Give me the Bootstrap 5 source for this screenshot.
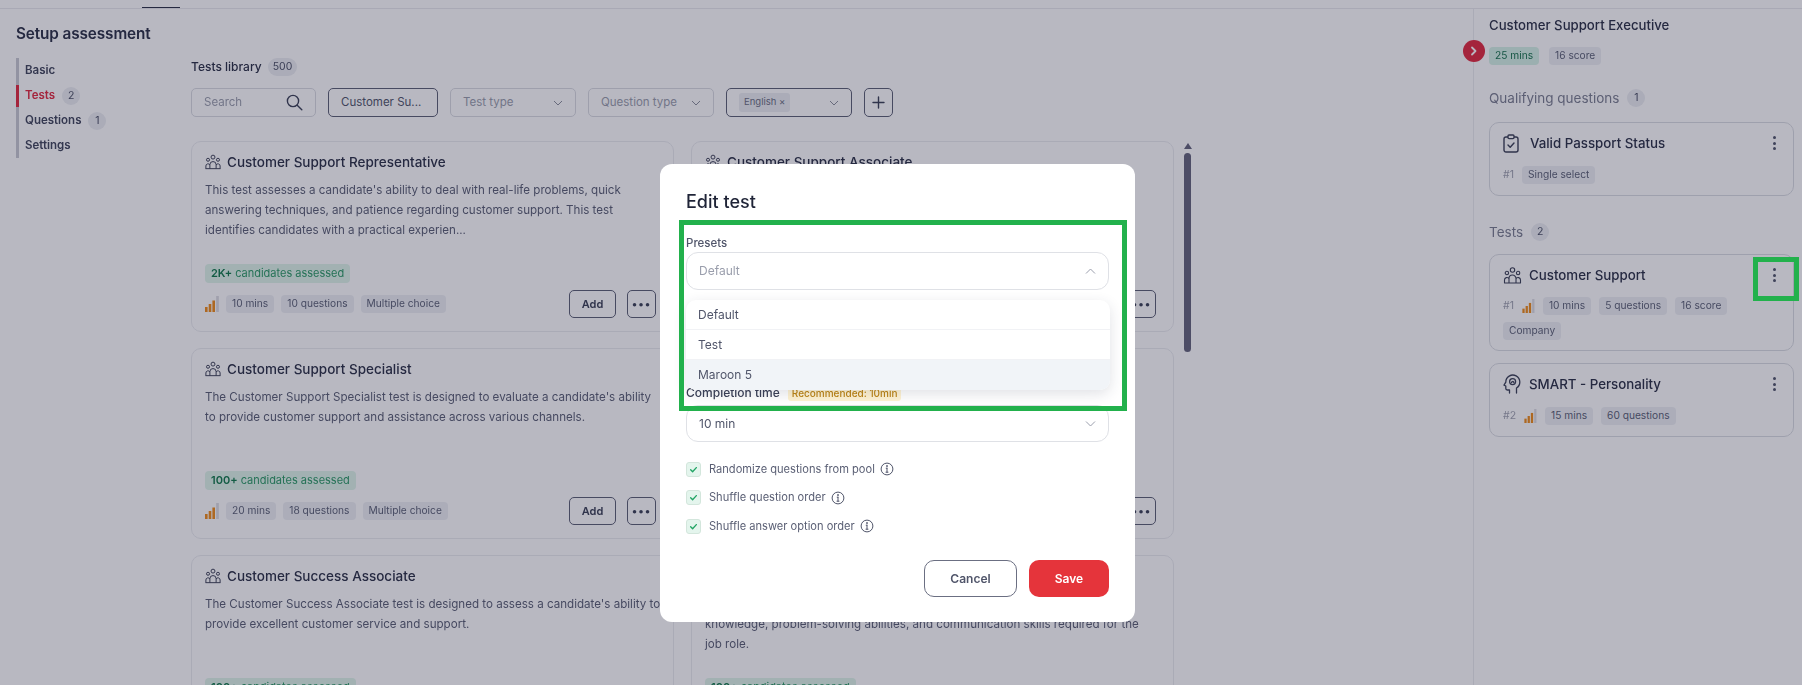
<!DOCTYPE html>
<html lang="en">
<head>
<meta charset="UTF-8">
<title>Edit test</title>
<link href="https://cdn.jsdelivr.net/npm/bootstrap@5.3.0/dist/css/bootstrap.min.css" rel="stylesheet">
<style>
html, body { height: 685px; overflow: hidden; }
body { font-family: Inter, "Noto Sans", sans-serif; color: #2b3046; background: #fff; position: relative; }

/* top strip */
.top-strip { height: 9px; border-bottom: 1px solid #e9eaee; position: relative; }
.top-strip span { position: absolute; left: 142px; bottom: 0; width: 38px; height: 1px; background: #2b3046; }
.page-cols { height: 676px; overflow: hidden; }

/* left menu */
.side-col { width: 191px; padding: 14px 0 0 16px; flex-shrink: 0; }
.side-title { font-size: 15.3px; font-weight: 600; line-height: 22px; margin-bottom: 13px; letter-spacing: -.1px; }
.side-menu { border-left: 3px solid #c9cad2; width: 150px; }
.side-menu a { display: flex; align-items: center; gap: 7px; height: 25px; padding-left: 6px; font-size: 11.5px; font-weight: 600; color: #41465c; text-decoration: none; }
.side-menu a.on { color: #e3293f; position: relative; }
.side-menu a.on::before { content: ""; position: absolute; left: -3px; top: 2px; bottom: 1px; width: 3px; background: #e3293f; }
.count-pill { display: inline-flex; align-items: center; justify-content: center; min-width: 18px; height: 18px; padding: 0 5px; border-radius: 9px; background: #eceef2; font-size: 10.5px; font-weight: 400; color: #4a4f64; }

/* library */
.lib-col { width: 1282px; flex-shrink: 0; position: relative; padding-top: 49px; }
.lib-head { font-size: 12px; font-weight: 500; height: 18px; gap: 6px; }
.filter-row { margin-top: 12px; gap: 12px; }
.filter-box { width: 126px; height: 29px; border: 1px solid #d9dbe1; border-radius: 5px; padding: 0 12px; font-size: 11.5px; color: #9a9eac; background: #fff; }
.filter-box.search-box { width: 125px; }
.filter-box.picked { width: 110px; border: 1.5px solid #5c6075; color: #50556a; }
.filter-box.lang-box { border: 1.5px solid #5c6075; }
.lang-tag { background: #eceef2; color: #6b6f82; font-size: 9.5px; border-radius: 3px; padding: 2px 5px; }
.plus-btn { width: 29px; height: 29px; border: 1.5px solid #5c6075; border-radius: 5px; }
.card-grid { display: grid; grid-template-columns: 483px 483px; column-gap: 17px; row-gap: 16px; margin-top: 24px; }
.test-card { height: 191px; border: 1px solid #ebecf0; border-radius: 10px; padding: 9px 17px 13px 13px; }
.test-title { font-size: 13.5px; font-weight: 500; line-height: 22px; gap: 6px; }
.test-text { font-size: 11.6px; line-height: 20px; height: 60px; margin: 7px 0 24px; color: #5a5f74; white-space: nowrap; }
.green-tag { display: inline-block; height: 19px; line-height: 19px; padding: 0 6px; border-radius: 4px; background: #dff5ea; color: #2b9a65; font-size: 11px; vertical-align: top; }
.green-tag b { font-weight: 600; color: #117a4b; }
.card-foot { margin-top: 2px; height: 28px; gap: 7px; }
.gray-tag { display: inline-flex; align-items: center; height: 18px; padding: 0 6px; border-radius: 4px; background: #eef0f4; color: #5a5f74; font-size: 10.2px; white-space: nowrap; }
.add-btn, .more-btn { height: 28px; border: 1.5px solid #5c6075; border-radius: 5px; background: #fff; font-size: 11px; font-weight: 600; color: #3b4056; padding: 0; }
.add-btn { width: 47px; }
.more-btn { width: 29px; margin-left: 11px; letter-spacing: 1px; }
.fake-scroll { position: absolute; left: 993px; top: 134px; width: 7px; }
.fake-scroll i { display: block; width: 0; height: 0; margin: 0 auto 4px; border: 4px solid transparent; border-top: 0; border-bottom: 6px solid #64647c; }
.fake-scroll u { display: block; width: 7px; height: 199px; border-radius: 4px; background: #64647c; }

/* summary on the right */
.sum-col { flex: 1; border-left: 1px solid #ebecf0; padding: 7px 8px 0 15px; position: relative; }
.sum-title { font-size: 13.2px; font-weight: 500; line-height: 18px; }
.toggle-dot { position: absolute; left: -11px; top: 31px; width: 22px; height: 22px; border-radius: 50%; background: #e3293f; color: #fff; }
.sum-tags { margin-top: 13px; gap: 10px; }
.gray-tag.mint-tag { background: #d6f2e6; color: #15714b; }
.sum-head { font-size: 13.5px; color: #7a7e90; line-height: 20px; gap: 8px; }
.sum-card { border: 1px solid #dadce2; border-radius: 10px; padding: 10px 17px 0 13px; }
.sum-card-title { font-size: 13.3px; font-weight: 500; line-height: 20px; gap: 7px; }
.rank-no { font-size: 10.5px; color: #a0a3b0; }
.kebab { display: flex; flex-direction: column; gap: 2.5px; width: 3px; }
.kebab span { width: 3px; height: 3px; border-radius: 50%; background: #50556a; }
.mt-section-a { margin-top: 23px; }
.card-q { margin-top: 14px; height: 74px; }
.row-q { margin-top: 13px; }
.mt-section-b { margin-top: 26px; }
.card-t1 { margin-top: 12px; height: 97px; }
.card-t2 { margin-top: 12px; height: 74px; }
.row-t { margin-top: 12px; gap: 7px 8px; }
.card-t2 .row-t { margin-top: 13px; }
.card-t1 .row-t span:last-child { margin-right: 60px; }

/* backdrop and modal */
.modal-backdrop.show { background: #1b1b37; opacity: .31; }
.page-blur { filter: blur(.7px); }
.modal-dialog.edit-dialog { max-width: 475px; width: 475px; margin: 164px 0 0 660px; }
.edit-dialog .modal-content { border: 0; border-radius: 12px; height: 458px; padding: 24px 26px 0; }
.edit-heading { font-size: 18px; font-weight: 500; line-height: 28px; margin: 0 0 19px; color: #1f2437; }
.field-label { font-size: 11.5px; font-weight: 500; color: #50556a; line-height: 16px; margin-bottom: 1px; }
.select-box { height: 38px; border: 1px solid #dfe1e6; border-radius: 12px; padding: 0 12px; font-size: 12px; color: #9a9eac; width: 423px; }
.select-box.filled { color: #50556a; height: 37px; margin-top: 2px; }
.preset-menu.dropdown-menu { position: absolute; left: 26px; top: 136px; width: 424px; border: 0; border-radius: 10px; padding: 0; box-shadow: 0 4px 14px rgba(40, 50, 80, .14); overflow: hidden; }
.preset-menu .dropdown-item { height: 30px; padding: 0 12px; line-height: 29px; font-size: 12px; color: #50556a; border-bottom: 1px solid #f1f2f5; }
.preset-menu .dropdown-item.hovered { background: #f1f4f8; border: 0; }
.time-row { margin-top: 93px; height: 20px; gap: 8px; }
.time-row .field-label { font-size: 12px; margin: 0; color: #3b4056; }
.rec-tag { background: #fff3d2; color: #bd8412; font-size: 10px; font-weight: 500; border-radius: 3px; padding: 1px 4px; line-height: 14px; }
.check-list { margin-top: 19px; gap: 12.5px; }
.check-list .form-check { margin: 0; padding: 0; min-height: 0; height: 16px; font-size: 11.1px; color: #5a5f74; }
.check-list .form-check svg { margin-left: 5px; }
.check-list .form-check-input { float: none; margin: 0 8px 0 0; width: 15px; height: 15px; border-radius: 3px; background-color: #e4f5ed; border-color: #d3e6dc; background-image: url("data:image/svg+xml,%3csvg xmlns='http://www.w3.org/2000/svg' viewBox='0 0 16 16'%3e%3cpath fill='none' stroke='%2322a565' stroke-width='1.7' stroke-linecap='round' stroke-linejoin='round' d='M4.5 8.3l2.4 2.4 4.6-5'/%3e%3c/svg%3e"); }
.edit-actions { position: absolute; right: 26px; bottom: 25px; gap: 12px; }
.btn.cancel-btn, .btn.save-btn { height: 37px; font-size: 12px; font-weight: 600; border-radius: 10px; padding: 0; }
.btn.cancel-btn { width: 93px; border: 1.5px solid #6b6f82; color: #50556a; background: #fff; }
.btn.save-btn { width: 80px; background: #e5343b; border: 0; color: #fff; }

/* green annotation boxes */
.mark-box { position: absolute; border: 5px solid #22b14c; z-index: 1060; pointer-events: none; }
.mark-presets { left: 679px; top: 220px; width: 448px; height: 191px; }
.mark-kebab { left: 1753px; top: 257px; width: 46px; height: 44px; }
</style>
</head>
<body>

<div class="page-blur">
  <div class="top-strip"><span></span></div>
  <div class="d-flex page-cols">

    <aside class="side-col">
      <div class="side-title">Setup assessment</div>
      <nav class="side-menu">
        <a href="#">Basic</a>
        <a href="#" class="on">Tests <span class="count-pill">2</span></a>
        <a href="#">Questions <span class="count-pill">1</span></a>
        <a href="#">Settings</a>
      </nav>
    </aside>

    <main class="lib-col">
      <div class="d-flex align-items-center lib-head">Tests library <span class="count-pill">500</span></div>
      <div class="d-flex filter-row">
        <div class="filter-box search-box d-flex align-items-center justify-content-between">Search
          <svg width="17" height="17" viewBox="0 0 17 17" fill="none" stroke="#3b4056" stroke-width="1.4" stroke-linecap="round"><circle cx="7" cy="7" r="5.6"/><path d="M11.2 11.2l4.6 4.6"/></svg>
        </div>
        <div class="filter-box picked d-flex align-items-center">Customer Su...</div>
        <div class="filter-box d-flex align-items-center justify-content-between">Test type
          <svg width="10" height="6" viewBox="0 0 10 6" fill="none" stroke="#8a8e9c"><path d="M1 1l4 4 4-4"/></svg>
        </div>
        <div class="filter-box d-flex align-items-center justify-content-between">Question type
          <svg width="10" height="6" viewBox="0 0 10 6" fill="none" stroke="#8a8e9c"><path d="M1 1l4 4 4-4"/></svg>
        </div>
        <div class="filter-box lang-box d-flex align-items-center justify-content-between"><span class="lang-tag">English &times;</span>
          <svg width="10" height="6" viewBox="0 0 10 6" fill="none" stroke="#8a8e9c"><path d="M1 1l4 4 4-4"/></svg>
        </div>
        <div class="plus-btn d-flex align-items-center justify-content-center">
          <svg width="13" height="13" viewBox="0 0 13 13" stroke="#3b4056" stroke-width="1.4" stroke-linecap="round"><path d="M6.5 1v11M1 6.5h11"/></svg>
        </div>
      </div>

      <svg width="0" height="0" class="position-absolute">
        <symbol id="ico-people" viewBox="0 0 18 17" fill="none" stroke="#3b4056" stroke-width="1.1">
          <circle cx="9" cy="3" r="2.2"/><circle cx="3.4" cy="6" r="1.7"/><circle cx="14.6" cy="6" r="1.7"/>
          <path d="M5.5 16v-4.5a3.5 3.5 0 0 1 7 0V16M1 16v-3a2.4 2.4 0 0 1 4.5-1.2M17 16v-3a2.4 2.4 0 0 0-4.5-1.2M.6 16h16.8"/>
        </symbol>
        <symbol id="ico-level" viewBox="0 0 14 16">
          <rect x="0" y="11" width="2.6" height="5" fill="#f08c1a"/><rect x="3.7" y="8" width="2.6" height="8" fill="#f08c1a"/><rect x="7.4" y="4.5" width="2.6" height="11.5" fill="#f08c1a"/><rect x="11.2" y="0" width="2.6" height="16" fill="#dcdde2"/>
        </symbol>
        <symbol id="ico-info" viewBox="0 0 14 14" fill="none" stroke="#50556a" stroke-width="1">
          <circle cx="7" cy="7" r="5.9"/><path d="M7 6.2v4M6 10.2h2M6.2 6.2H7" stroke-linecap="round"/><circle cx="7" cy="4" r=".5" fill="#50556a"/>
        </symbol>
      </svg>

      <div class="card-grid">
        <div class="test-card">
          <div class="d-flex align-items-center test-title"><svg width="16" height="16"><use href="#ico-people"/></svg>Customer Support Representative</div>
          <p class="test-text">This test assesses a candidate's ability to deal with real-life problems, quick<br>answering techniques, and patience regarding customer support. This test<br>identifies candidates with a practical experien...</p>
          <span class="green-tag"><b>2K+</b> candidates assessed</span>
          <div class="d-flex align-items-center card-foot">
            <svg width="14" height="16"><use href="#ico-level"/></svg>
            <span class="gray-tag">10 mins</span><span class="gray-tag">10 questions</span><span class="gray-tag">Multiple choice</span>
            <div class="ms-auto d-flex"><button class="add-btn">Add</button><button class="more-btn">&bull;&bull;&bull;</button></div>
          </div>
        </div>
        <div class="test-card">
          <div class="d-flex align-items-center test-title"><svg width="16" height="16"><use href="#ico-people"/></svg>Customer Support Associate</div>
          <p class="test-text">This test assesses a candidate's ability to assist customers<br>and to resolve their questions and problems.</p>
          <span class="green-tag"><b>1K+</b> candidates assessed</span>
          <div class="d-flex align-items-center card-foot">
            <svg width="14" height="16"><use href="#ico-level"/></svg>
            <span class="gray-tag">10 mins</span><span class="gray-tag">10 questions</span><span class="gray-tag">Multiple choice</span>
            <div class="ms-auto d-flex"><button class="add-btn">Add</button><button class="more-btn">&bull;&bull;&bull;</button></div>
          </div>
        </div>

        <div class="test-card">
          <div class="d-flex align-items-center test-title"><svg width="16" height="16"><use href="#ico-people"/></svg>Customer Support Specialist</div>
          <p class="test-text">The Customer Support Specialist test is designed to evaluate a candidate's ability<br>to provide customer support and assistance across various channels.</p>
          <span class="green-tag"><b>100+</b> candidates assessed</span>
          <div class="d-flex align-items-center card-foot">
            <svg width="14" height="16"><use href="#ico-level"/></svg>
            <span class="gray-tag">20 mins</span><span class="gray-tag">18 questions</span><span class="gray-tag">Multiple choice</span>
            <div class="ms-auto d-flex"><button class="add-btn">Add</button><button class="more-btn">&bull;&bull;&bull;</button></div>
          </div>
        </div>
        <div class="test-card">
          <div class="d-flex align-items-center test-title"><svg width="16" height="16"><use href="#ico-people"/></svg>Customer Service Representative</div>
          <p class="test-text">This test assesses how a candidate supports customers.</p>
          <span class="green-tag"><b>100+</b> candidates assessed</span>
          <div class="d-flex align-items-center card-foot">
            <svg width="14" height="16"><use href="#ico-level"/></svg>
            <span class="gray-tag">20 mins</span><span class="gray-tag">18 questions</span><span class="gray-tag">Multiple choice</span>
            <div class="ms-auto d-flex"><button class="add-btn">Add</button><button class="more-btn">&bull;&bull;&bull;</button></div>
          </div>
        </div>

        <div class="test-card">
          <div class="d-flex align-items-center test-title"><svg width="16" height="16"><use href="#ico-people"/></svg>Customer Success Associate</div>
          <p class="test-text">The Customer Success Associate test is designed to assess a candidate's ability to<br>provide excellent customer service and support.</p>
          <span class="green-tag"><b>100+</b> candidates assessed</span>
        </div>
        <div class="test-card">
          <div class="d-flex align-items-center test-title"><svg width="16" height="16"><use href="#ico-people"/></svg>Customer Success Manager</div>
          <p class="test-text">This test evaluates the customer service<br>knowledge, problem-solving abilities, and communication skills required for the<br>job role.</p>
          <span class="green-tag"><b>100+</b> candidates assessed</span>
        </div>
      </div>

      <div class="fake-scroll"><i></i><u></u></div>
    </main>

    <section class="sum-col">
      <div class="toggle-dot d-flex align-items-center justify-content-center">
        <svg width="8" height="10" viewBox="0 0 8 10" fill="none" stroke="#fff" stroke-width="1.8" stroke-linecap="round" stroke-linejoin="round"><path d="M2 1.5L5.5 5 2 8.5"/></svg>
      </div>
      <div class="sum-title">Customer Support Executive</div>
      <div class="d-flex sum-tags">
        <span class="gray-tag mint-tag">25 mins</span><span class="gray-tag">16 score</span>
      </div>

      <div class="d-flex align-items-center sum-head mt-section-a">Qualifying questions <span class="count-pill">1</span></div>
      <div class="sum-card card-q">
        <div class="d-flex align-items-center justify-content-between">
          <div class="d-flex align-items-center sum-card-title">
            <svg width="16" height="19" viewBox="0 0 16 19" fill="none" stroke="#3b4056" stroke-width="1.4" stroke-linejoin="round" stroke-linecap="round"><rect x="1" y="3" width="14" height="15" rx="2"/><rect x="5" y="1" width="6" height="3.6" rx="1" fill="#fff"/><path d="M5 11l2.2 2.2L11 9"/></svg>
            <span class="ms-1">Valid Passport Status</span>
          </div>
          <div class="kebab"><span></span><span></span><span></span></div>
        </div>
        <div class="d-flex align-items-center gap-2 row-q"><span class="rank-no">#1</span><span class="gray-tag">Single select</span></div>
      </div>

      <div class="d-flex align-items-center sum-head mt-section-b">Tests <span class="count-pill">2</span></div>
      <div class="sum-card card-t1">
        <div class="d-flex align-items-center justify-content-between">
          <div class="d-flex align-items-center sum-card-title">
            <svg width="19" height="17"><use href="#ico-people"/></svg><span>Customer Support</span>
          </div>
          <div class="kebab"><span></span><span></span><span></span></div>
        </div>
        <div class="d-flex flex-wrap align-items-center row-t">
          <span class="rank-no">#1</span><svg width="13" height="14"><use href="#ico-level"/></svg>
          <span class="gray-tag">10 mins</span><span class="gray-tag">5 questions</span><span class="gray-tag">16 score</span><span class="gray-tag">Company</span>
        </div>
      </div>
      <div class="sum-card card-t2">
        <div class="d-flex align-items-center justify-content-between">
          <div class="d-flex align-items-center sum-card-title">
            <svg width="19" height="20" viewBox="0 0 19 20" fill="none" stroke="#3b4056" stroke-width="1.3" stroke-linecap="round" stroke-linejoin="round"><path d="M6.5 19v-3H4.2a1.4 1.4 0 0 1-1.4-1.4V12L1 11.2l1.8-3A7 7 0 1 1 13.5 14v5"/><circle cx="9.6" cy="7.6" r="3"/><path d="M8.5 8.6c0-1.4 2.3-1.4 2.3-.2"/></svg>
            <span>SMART - Personality</span>
          </div>
          <div class="kebab"><span></span><span></span><span></span></div>
        </div>
        <div class="d-flex align-items-center row-t"><span class="rank-no">#2</span><svg width="13" height="14"><use href="#ico-level"/></svg><span class="gray-tag">15 mins</span><span class="gray-tag">60 questions</span></div>
      </div>
    </section>
  </div>
</div>

<div class="modal-backdrop show"></div>

<div class="modal d-block" tabindex="-1">
  <div class="modal-dialog edit-dialog">
    <div class="modal-content">
      <h5 class="edit-heading">Edit test</h5>
      <div class="field-label">Presets</div>
      <div class="select-box d-flex align-items-center justify-content-between">Default
        <svg width="11" height="6" viewBox="0 0 11 6" fill="none" stroke="#9a9eac"><path d="M1 5.5l4.5-4.5 4.5 4.5"/></svg>
      </div>
      <div class="dropdown-menu show preset-menu">
        <a class="dropdown-item" href="#">Default</a>
        <a class="dropdown-item" href="#">Test</a>
        <a class="dropdown-item hovered" href="#">Maroon 5</a>
      </div>
      <div class="d-flex align-items-center time-row">
        <div class="field-label">Completion time</div><span class="rec-tag">Recommended: 10min</span>
      </div>
      <div class="select-box filled d-flex align-items-center justify-content-between">10 min
        <svg width="11" height="6" viewBox="0 0 11 6" fill="none" stroke="#9a9eac"><path d="M1 .5l4.5 4.5L10 .5"/></svg>
      </div>
      <div class="d-flex flex-column check-list">
        <label class="form-check d-flex align-items-center"><input class="form-check-input" type="checkbox" checked>Randomize questions from pool <svg width="14" height="14"><use href="#ico-info"/></svg></label>
        <label class="form-check d-flex align-items-center"><input class="form-check-input" type="checkbox" checked>Shuffle question order <svg width="14" height="14"><use href="#ico-info"/></svg></label>
        <label class="form-check d-flex align-items-center"><input class="form-check-input" type="checkbox" checked>Shuffle answer option order <svg width="14" height="14"><use href="#ico-info"/></svg></label>
      </div>
      <div class="d-flex edit-actions">
        <button class="btn cancel-btn">Cancel</button>
        <button class="btn save-btn">Save</button>
      </div>
    </div>
  </div>
</div>

<div class="mark-box mark-presets"></div>
<div class="mark-box mark-kebab"></div>

<script src="https://cdn.jsdelivr.net/npm/bootstrap@5.3.0/dist/js/bootstrap.bundle.min.js"></script>
</body>
</html>
